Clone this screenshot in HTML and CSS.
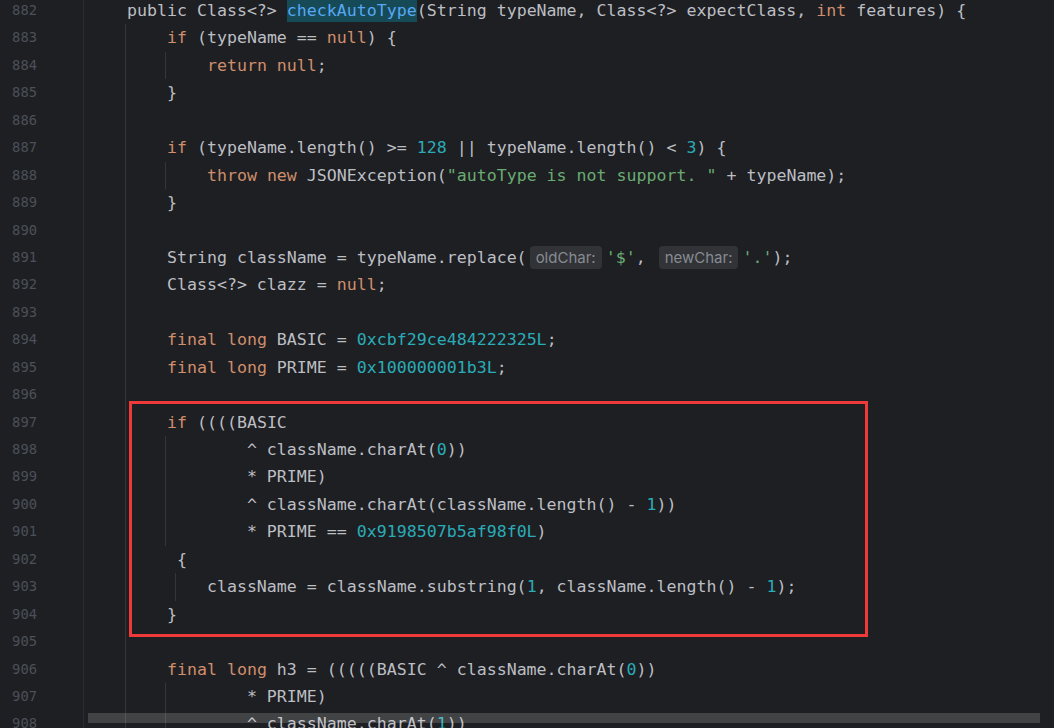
FILE: index.html
```html
<!DOCTYPE html>
<html lang="en">
<head>
    <meta charset="UTF-8">
    <title>FastJSON - ParserConfig.java</title>
    <link rel="stylesheet" href="styles.css">
</head>
<body>
    <div class="editor">
        <div class="line"><span class="ln">882</span><span class="code">public Class&lt;?&gt; <span class="hl">checkAutoType</span>(String typeName, Class&lt;?&gt; expectClass, <span class="kw">int</span> features) {</span></div>
        <div class="line"><span class="ln">883</span><span class="code g0">    <span class="kw">if</span> (typeName == <span class="kw">null</span>) {</span></div>
        <div class="line"><span class="ln">884</span><span class="code g4">        <span class="kw">return null</span>;</span></div>
        <div class="line"><span class="ln">885</span><span class="code g0">    }</span></div>
        <div class="line"><span class="ln">886</span><span class="code g0"></span></div>
        <div class="line"><span class="ln">887</span><span class="code g0">    <span class="kw">if</span> (typeName.length() &gt;= <span class="num">128</span> || typeName.length() &lt; <span class="num">3</span>) {</span></div>
        <div class="line"><span class="ln">888</span><span class="code g4">        <span class="kw">throw new</span> JSONException(<span class="str">"autoType is not support. "</span> + typeName);</span></div>
        <div class="line"><span class="ln">889</span><span class="code g0">    }</span></div>
        <div class="line"><span class="ln">890</span><span class="code g0"></span></div>
        <div class="line"><span class="ln">891</span><span class="code g0">    String className = typeName.replace(<span class="hint">oldChar:</span><span class="str">'$'</span>, <span class="hint">newChar:</span><span class="str">'.'</span>);</span></div>
        <div class="line"><span class="ln">892</span><span class="code g0">    Class&lt;?&gt; clazz = <span class="kw">null</span>;</span></div>
        <div class="line"><span class="ln">893</span><span class="code g0"></span></div>
        <div class="line"><span class="ln">894</span><span class="code g0">    <span class="kw">final long</span> BASIC = <span class="num">0xcbf29ce484222325L</span>;</span></div>
        <div class="line"><span class="ln">895</span><span class="code g0">    <span class="kw">final long</span> PRIME = <span class="num">0x100000001b3L</span>;</span></div>
        <div class="line"><span class="ln">896</span><span class="code g0"></span></div>
        <div class="line"><span class="ln">897</span><span class="code g0">    <span class="kw">if</span> ((((BASIC</span></div>
        <div class="line"><span class="ln">898</span><span class="code g4">            ^ className.charAt(<span class="num">0</span>))</span></div>
        <div class="line"><span class="ln">899</span><span class="code g4">            * PRIME)</span></div>
        <div class="line"><span class="ln">900</span><span class="code g4">            ^ className.charAt(className.length() - <span class="num">1</span>))</span></div>
        <div class="line"><span class="ln">901</span><span class="code g4">            * PRIME == <span class="num">0x9198507b5af98f0L</span>)</span></div>
        <div class="line"><span class="ln">902</span><span class="code g0">     {</span></div>
        <div class="line"><span class="ln">903</span><span class="code g5">        className = className.substring(<span class="num">1</span>, className.length() - <span class="num">1</span>);</span></div>
        <div class="line"><span class="ln">904</span><span class="code g0">    }</span></div>
        <div class="line"><span class="ln">905</span><span class="code g0"></span></div>
        <div class="line"><span class="ln">906</span><span class="code g0">    <span class="kw">final long</span> h3 = (((((BASIC ^ className.charAt(<span class="num">0</span>))</span></div>
        <div class="line"><span class="ln">907</span><span class="code g4">            * PRIME)</span></div>
        <div class="line"><span class="ln">908</span><span class="code g4">            ^ className.charAt(<span class="num">1</span>))</span></div>

        <div class="mark"></div>
        <div class="hscroll"></div>
    </div>
</body>
</html>
```

FILE: styles.css
```css
body {
    margin: 0;
    background: #1e1f22;
    overflow: hidden;
    height: 728px;
}

.editor {
    position: relative;
    height: 728px;
    font-family: 'DejaVu Sans Mono', 'Liberation Mono', monospace;
    color: #bcbec4;
}

.line {
    display: flex;
    height: 27.45px;
    line-height: 27.45px;
}

.line:first-child {
    margin-top: -3px;
}

.ln {
    flex: 0 0 84px;
    box-sizing: border-box;
    padding-right: 46px;
    text-align: right;
    font-size: 13.8px;
    color: #4b5059;
    border-right: 1px solid #2b2d30;
}

.code {
    flex: 1;
    padding-left: 43px;
    font-size: 16.6px;
    white-space: pre;
}

/* indent guides */
.g0 {
    background: linear-gradient(#34363b, #34363b) 41px 0 / 1px 100% no-repeat;
}

.g4 {
    background:
        linear-gradient(#34363b, #34363b) 41px 0 / 1px 100% no-repeat,
        linear-gradient(#34363b, #34363b) 81px 0 / 1px 100% no-repeat;
}

.g5 {
    background:
        linear-gradient(#34363b, #34363b) 41px 0 / 1px 100% no-repeat,
        linear-gradient(#34363b, #34363b) 91px 0 / 1px 100% no-repeat;
}

.kw { color: #cf8e6d; }
.num { color: #2aacb8; }
.str { color: #6aab73; }

.hl {
    display: inline-block;
    vertical-align: top;
    height: 25px;
    color: #56a8f5;
    background: #174a57;
}

.hint {
    display: inline-block;
    vertical-align: top;
    margin: 2px 4px 0 3px;
    padding: 0 6px;
    height: 23px;
    line-height: 23px;
    border-radius: 4px;
    background: #313337;
    color: #878b92;
    font-family: 'Inter', 'Noto Sans', sans-serif;
    font-size: 15px;
}

/* red annotation box */
.mark {
    position: absolute;
    left: 129px;
    top: 404px;
    width: 739px;
    height: 236px;
    box-sizing: border-box;
    border: 3px solid #f03a3a;
}

.hscroll {
    position: absolute;
    left: 88px;
    top: 716px;
    width: 952px;
    height: 10px;
    background: rgba(255, 255, 255, 0.16);
}
```
